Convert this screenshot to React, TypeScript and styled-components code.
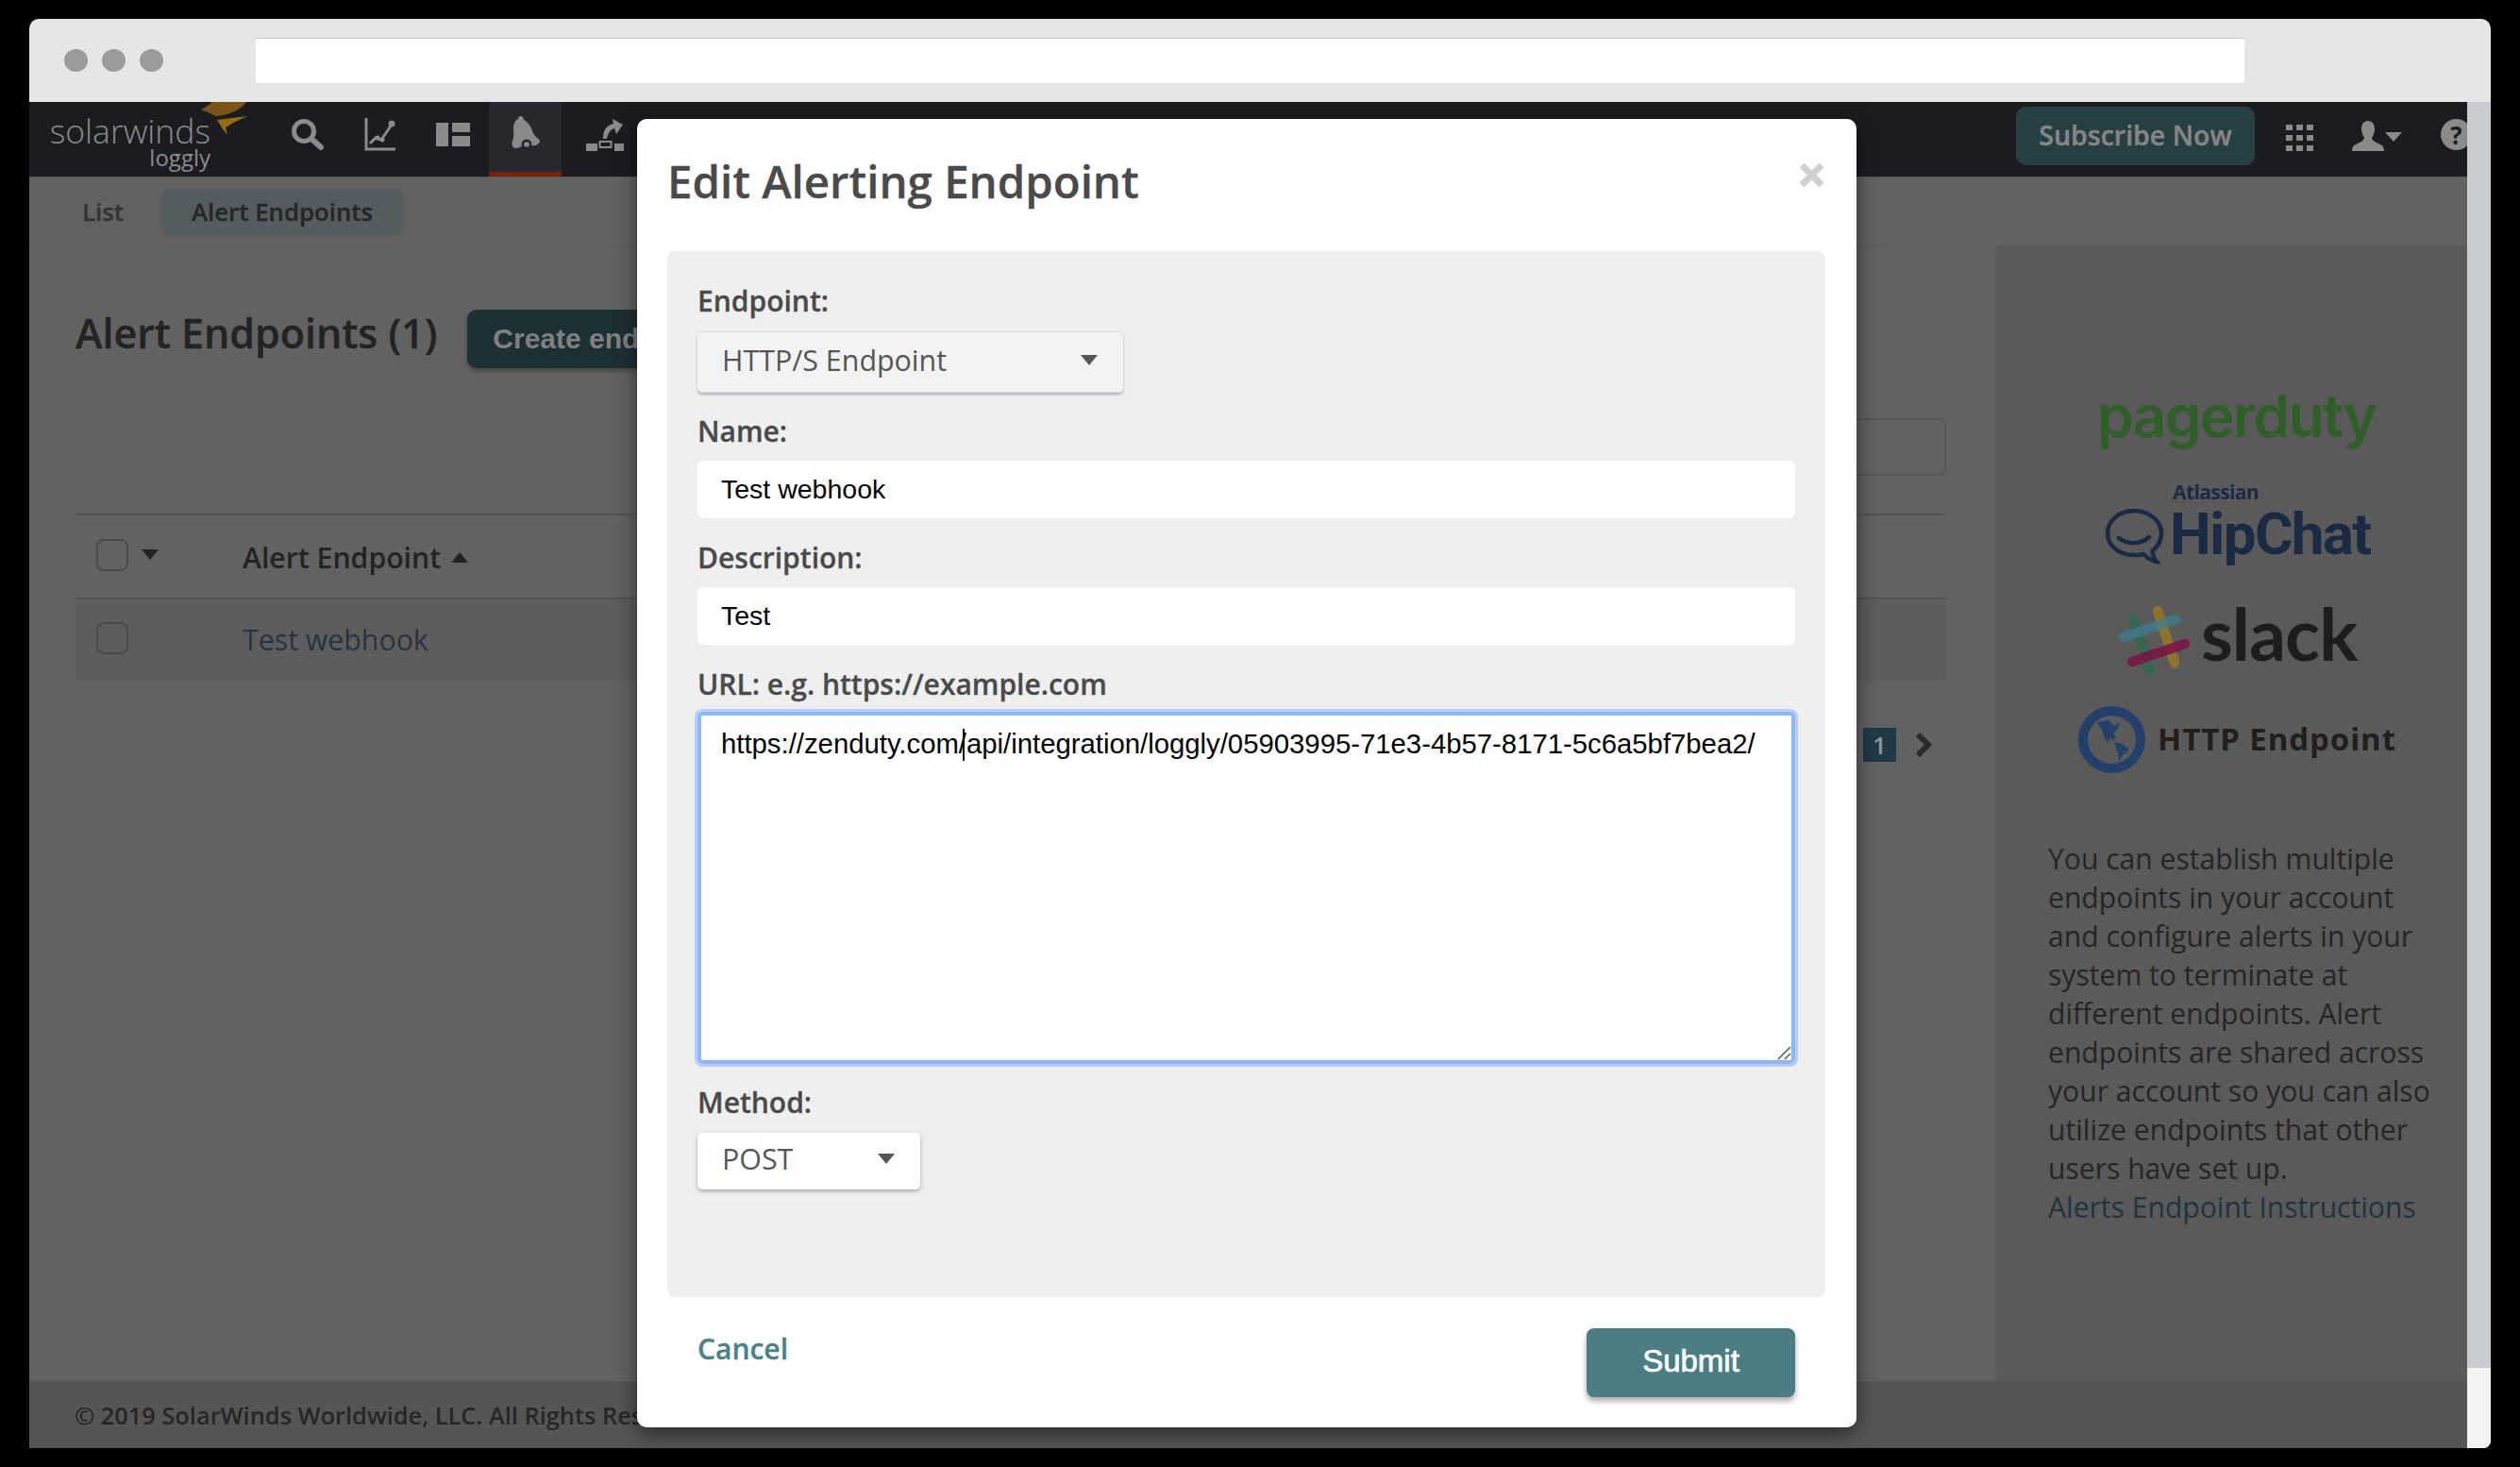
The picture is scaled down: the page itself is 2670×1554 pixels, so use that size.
import styled, { createGlobalStyle } from 'styled-components';

const GlobalStyle = createGlobalStyle`
  html, body {
    margin: 0;
    background: #000;
  }
  body {
    width: 2670px;
    height: 1554px;
    overflow: hidden;
    font-family: 'Open Sans', 'Liberation Sans', sans-serif;
  }
  * {
    box-sizing: border-box;
  }
`;

const Screen = styled.div`
  padding: 20px 31px;
  height: 1554px;
`;

const BrowserWindow = styled.div`
  position: relative;
  display: flex;
  flex-direction: column;
  width: 2608px;
  height: 1514px;
  overflow: hidden;
  border-radius: 10px 10px 8px 0;
  background: #e6e6e6;
`;

const TitleBar = styled.div`
  display: flex;
  align-items: center;
  flex: 0 0 88px;
  padding-left: 37px;
`;

const Dot = styled.span`
  width: 25px;
  height: 24px;
  margin-right: 15px;
  border-radius: 50%;
  background: #9b9b9b;
`;

const AddressBar = styled.div`
  width: 2107px;
  height: 48px;
  margin-left: 83px;
  border-top: 1px solid #c4c4c4;
  border-radius: 3px;
  background: #fff;
`;

const Body = styled.div`
  display: flex;
  flex: 1;
  min-height: 0;
`;

const Page = styled.div`
  display: flex;
  flex-direction: column;
  width: 2583px;
`;

const Scrollbar = styled.div`
  display: flex;
  flex-direction: column;
  flex: 1;
  background: #f3f3f4;
`;

const ScrollThumb = styled.div`
  height: 1341px;
  background: #c9ccd1;
`;

const Header = styled.header`
  position: relative;
  display: flex;
  align-items: stretch;
  flex: 0 0 80px;
  border-bottom: 1px solid #55565a;
  background: #1b1c20;
`;

const Brand = styled.div`
  position: relative;
  display: flex;
  flex-direction: column;
  align-items: flex-end;
  width: 256px;
  padding-right: 64px;
  color: #8c8c8c;
`;

const BrandName = styled.span`
  margin-top: 9px;
  font-size: 35.5px;
  font-weight: 300;
  line-height: 42px;
`;

const BrandSub = styled.span`
  margin-top: -7px;
  font-size: 24px;
  line-height: 30px;
`;

const BrandMark = styled.svg`
  position: absolute;
  top: 0;
  left: 182px;
`;

const NavItem = styled.div<{ $active?: boolean }>`
  display: flex;
  align-items: center;
  justify-content: center;
  width: 77px;
  padding-bottom: ${(p) => (p.$active ? '5px' : '10px')};
  border-bottom: ${(p) => (p.$active ? '5px solid #7a2208' : '0')};
  background: ${(p) => (p.$active ? '#27282d' : 'transparent')};
`;

const NavIcon = styled.svg<{ $shiftX?: number; $shiftY?: number }>`
  margin-left: ${(p) => p.$shiftX ?? 0}px;
  margin-top: ${(p) => p.$shiftY ?? 0}px;
`;

const HeaderRight = styled.div`
  display: flex;
  align-items: flex-start;
  margin-left: auto;
  overflow: hidden;
`;

const SubscribeButton = styled.div`
  display: flex;
  align-items: center;
  justify-content: center;
  width: 253px;
  height: 62px;
  margin-top: 5px;
  margin-right: -2px;
  padding-bottom: 2px;
  border-radius: 10px;
  background: #263f43;
  color: #868686;
  font-size: 28.5px;
  font-weight: 600;
  -webkit-text-stroke: 0.4px #868686;
`;

const HeaderIcon = styled.svg<{ $left: number; $top: number }>`
  flex: none;
  margin-left: ${(p) => p.$left}px;
  margin-top: ${(p) => p.$top}px;
  color: #8a8a8a;
`;

const HelpIcon = styled.span`
  display: flex;
  align-items: center;
  justify-content: center;
  flex: none;
  width: 33px;
  height: 33px;
  margin-top: 18px;
  margin-left: 41px;
  margin-right: -5px;
  border-radius: 50%;
  background: #8a8a8a;
  color: #1b1c20;
  font-size: 26px;
  font-weight: 700;
`;

const SubNav = styled.nav`
  display: flex;
  align-items: center;
  flex: 0 0 73px;
  padding-left: 24px;
  padding-top: 1px;
  border-bottom: 1px solid #5b5b5b;
  background: #626262;
`;

const Tab = styled.div<{ $active?: boolean }>`
  height: 50px;
  margin-right: 8px;
  padding: 0 32px;
  border-radius: 8px;
  background: ${(p) => (p.$active ? '#555c60' : 'transparent')};
  color: ${(p) => (p.$active ? '#262626' : '#333')};
  font-size: 25.8px;
  font-weight: 600;
  line-height: 48px;
  -webkit-text-stroke: 0.3px;
`;

const Main = styled.div`
  display: flex;
  flex: 0 0 1202px;
`;

const Content = styled.section`
  width: 2084px;
  padding: 67px 53px 0 49px;
  background: #626262;
`;

const TitleRow = styled.div`
  display: flex;
  gap: 32px;
`;

const PageTitle = styled.h1`
  margin: -6px 0 0;
  color: #232323;
  font-size: 43px;
  font-weight: 600;
  line-height: 62px;
  -webkit-text-stroke: 0.4px;
`;

const CreateButton = styled.div`
  width: 300px;
  height: 62px;
  padding-left: 27px;
  border-radius: 10px;
  background: #1c2f33;
  box-shadow: 0 3px 5px rgba(0, 0, 0, 0.3);
  color: #808080;
  font-family: 'Liberation Sans', sans-serif;
  font-size: 30px;
  font-weight: 700;
  line-height: 62px;
`;

const FilterRow = styled.div`
  display: flex;
  justify-content: flex-end;
  margin-top: 53px;
`;

const FilterInput = styled.div`
  width: 400px;
  height: 61px;
  border: 2px solid #585858;
  border-radius: 8px;
`;

const TableHead = styled.div`
  display: flex;
  align-items: center;
  height: 91px;
  margin-top: 40px;
  border-top: 2px solid #555;
  border-bottom: 2px solid #555;
`;

const TableRow = styled.div`
  display: flex;
  align-items: center;
  height: 86px;
  padding-bottom: 4px;
  background: #5d5d5d;
`;

const CheckCell = styled.div<{ $head?: boolean }>`
  display: flex;
  align-items: center;
  gap: 14px;
  width: 177px;
  padding-left: 22px;
  padding-bottom: ${(p) => (p.$head ? '4px' : '0')};
`;

const Checkbox = styled.span`
  width: 34px;
  height: 34px;
  border: 2px solid #4a4a4e;
  border-radius: 8px;
`;

const Caret = styled.span<{ $up?: boolean; $color?: string }>`
  display: inline-block;
  flex: none;
  width: 0;
  height: 0;
  border-left: 9px solid transparent;
  border-right: 9px solid transparent;
  ${(p) => (p.$up ? 'border-bottom' : 'border-top')}: 11px solid ${(p) => p.$color ?? '#555'};
`;

const HeadLabel = styled.div`
  display: flex;
  align-items: center;
  gap: 11px;
  padding-top: 1px;
  color: #232323;
  font-size: 30.2px;
  font-weight: 600;
`;

const RowLink = styled.a`
  margin-top: 3px;
  color: #24353f;
  font-size: 30.3px;
`;

const Pagination = styled.div`
  display: flex;
  align-items: center;
  justify-content: flex-end;
  gap: 20px;
  margin-top: 50px;
  padding-right: 15px;
`;

const PageNumber = styled.span`
  width: 35px;
  height: 36px;
  background: #1f3a46;
  color: #8a9aa0;
  font-size: 26px;
  font-weight: 600;
  line-height: 36px;
  text-align: center;
`;

const Sidebar = styled.aside`
  flex: 1;
  padding-top: 156px;
  background: #5a5a5a;
`;

const LogoRow = styled.div<{ $left: number; $height: number; $gap: number }>`
  position: relative;
  display: flex;
  align-items: flex-start;
  height: ${(p) => p.$height}px;
  margin-left: ${(p) => p.$left}px;
  margin-bottom: ${(p) => p.$gap}px;
`;

const PagerDutyMark = styled.span`
  margin-top: -21px;
  margin-left: -3px;
  color: #2f5e28;
  font-family: Inter, sans-serif;
  font-size: 62px;
  font-weight: 600;
  letter-spacing: -1.6px;
  line-height: 90px;
`;

const BubbleIcon = styled.svg`
  margin-top: 25px;
`;

const AtlassianMark = styled.span`
  position: absolute;
  top: -7px;
  left: 72px;
  color: #1b2a44;
  font-size: 21px;
  font-weight: 700;
  letter-spacing: -0.6px;
  line-height: 30px;
`;

const HipChatMark = styled.span`
  position: absolute;
  top: 11px;
  left: 69px;
  color: #1b2a44;
  font-family: Roboto, sans-serif;
  font-size: 62px;
  font-weight: 700;
  letter-spacing: -1.7px;
  line-height: 84px;
`;

const SlackMark = styled.span`
  margin-left: 12px;
  margin-top: -22px;
  color: #1f1c20;
  font-family: Lato, sans-serif;
  font-size: 77px;
  font-weight: 700;
  letter-spacing: -1px;
  line-height: 100px;
`;

const HttpMark = styled.span`
  margin-left: 13px;
  margin-top: 13px;
  color: #211e1c;
  font-size: 33px;
  font-weight: 700;
  letter-spacing: 0.9px;
  line-height: 44px;
`;

const SideText = styled.p`
  width: 415px;
  margin: 0 0 0 55px;
  color: #252525;
  font-size: 30.1px;
  line-height: 41px;
`;

const SideLink = styled.a`
  display: block;
  color: #1f3340;
`;

const Footer = styled.footer`
  flex: 1;
  padding-left: 48px;
  background: #555556;
  color: #262626;
  font-size: 25.4px;
  font-weight: 600;
  line-height: 72px;
`;

const Modal = styled.div`
  position: absolute;
  top: 106px;
  left: 644px;
  width: 1292px;
  height: 1386px;
  padding: 0 33px 0 32px;
  border-radius: 10px;
  background: #fff;
  box-shadow: 0 6px 22px rgba(0, 0, 0, 0.55);
`;

const ModalHeader = styled.div`
  display: flex;
  justify-content: space-between;
  height: 140px;
`;

const ModalTitle = styled.h2`
  margin: 0;
  padding-top: 32px;
  color: #4a4a4a;
  font-size: 47.4px;
  font-weight: 600;
  line-height: 68px;
  -webkit-text-stroke: 0.3px;
`;

const CloseButton = styled.svg`
  margin-top: 47px;
  margin-right: 2px;
  color: #d0d0d0;
`;

const FormPanel = styled.div`
  height: 1108px;
  padding: 33px 32px 0 32px;
  border-radius: 8px;
  background: #efefef;
`;

const Field = styled.div`
  margin-bottom: 22px;
`;

const Label = styled.label`
  display: block;
  height: 40px;
  margin-bottom: 11px;
  color: #4a4a4a;
  font-size: 30px;
  font-weight: 600;
  line-height: 40px;
  -webkit-text-stroke: 0.3px;
`;

const Select = styled.div<{ $width: number; $height: number; $muted?: boolean }>`
  display: flex;
  align-items: center;
  justify-content: space-between;
  width: ${(p) => p.$width}px;
  height: ${(p) => p.$height}px;
  margin-top: ${(p) => (p.$muted ? '13px' : '12px')};
  padding: 0 27px 5px 26px;
  border-radius: 5px;
  background: ${(p) => (p.$muted ? '#f3f3f4' : '#fff')};
  box-shadow: ${(p) =>
    p.$muted
      ? '0 0 0 1px #dcdce4, 0 3px 3px rgba(120, 120, 160, 0.55)'
      : '0 2px 4px rgba(90, 95, 105, 0.5)'};
  color: #555;
  font-size: 30.4px;
`;

const TextInput = styled.input`
  display: block;
  width: 100%;
  height: 61px;
  padding: 0 25px;
  border: 0;
  border-radius: 6px;
  outline: 0;
  background: #fff;
  color: #000;
  font-family: 'Liberation Sans', sans-serif;
  font-size: 28.5px;
`;

const UrlBox = styled.div`
  position: relative;
  width: 100%;
  height: 373px;
  margin-top: -2px;
  margin-bottom: -1px;
  padding: 12px 21px;
  border: 4px solid #8fb6fa;
  border-radius: 5px;
  outline: 3px solid #b4cdfa;
  background: #fff;
  color: #000;
  font-family: 'Liberation Sans', sans-serif;
  font-size: 29.3px;
  line-height: 36px;
  white-space: nowrap;
`;

const TextCaret = styled.span`
  display: inline-block;
  width: 0;
  height: 34px;
  margin-left: 4px;
  margin-right: -6px;
  border-left: 2px solid #111;
  vertical-align: -8px;
`;

const ResizeGrip = styled.svg`
  position: absolute;
  right: 0;
  bottom: 0;
  color: #555;
`;

const ModalFooter = styled.div`
  display: flex;
  justify-content: space-between;
  padding: 33px 32px 0 32px;
`;

const CancelLink = styled.a`
  color: #4a8286;
  font-size: 30px;
  font-weight: 600;
  line-height: 44px;
  -webkit-text-stroke: 0.3px;
`;

const SubmitButton = styled.button`
  width: 221px;
  height: 73px;
  padding: 0 0 4px;
  border: 0;
  border-radius: 8px;
  background: #4b7e82;
  box-shadow: 0 4px 6px rgba(0, 0, 0, 0.35);
  color: #fff;
  font-family: 'Liberation Sans', sans-serif;
  font-size: 33px;
  -webkit-text-stroke: 0.7px #fff;
`;

const App = () => {
  return (
    <Screen>
      <GlobalStyle />
      <BrowserWindow>
        <TitleBar>
          <Dot />
          <Dot />
          <Dot />
          <AddressBar />
        </TitleBar>
        <Body>
          <Page>
            <Header>
              <Brand>
                <BrandName>solarwinds</BrandName>
                <BrandSub>loggly</BrandSub>
                <BrandMark width="50" height="36" viewBox="0 0 50 36">
                  <path d="M0 8 Q8 4 12 0 H48 Q38 13 16 15 Z" fill="#7a5518" />
                  <path d="M17 19 L50 15 Q38 19 26 27 L28 35 Q22 28 17 19 Z" fill="#9a6c14" />
                </BrandMark>
              </Brand>
              <NavItem>
                <svg width="35" height="33" viewBox="0 0 35 33" fill="none" stroke="#8a8a8a">
                  <circle cx="14" cy="13" r="10.5" strokeWidth="5" />
                  <path d="M22 21 L32 30" strokeWidth="6" strokeLinecap="round" />
                </svg>
              </NavItem>
              <NavItem>
                <svg width="33" height="35" viewBox="0 0 33 35" fill="none" stroke="#8a8a8a">
                  <path d="M2 0 V33 H33" strokeWidth="3" />
                  <path d="M6 27 L12 21 L18 23 L29 7" strokeWidth="3" />
                  <circle cx="29" cy="6" r="3.5" fill="#8a8a8a" strokeWidth="0" />
                  <circle cx="14" cy="21" r="2.5" fill="#8a8a8a" strokeWidth="0" />
                  <circle cx="19" cy="23" r="2.5" fill="#8a8a8a" strokeWidth="0" />
                </svg>
              </NavItem>
              <NavItem>
                <svg width="36" height="25" viewBox="0 0 36 25" fill="#8a8a8a">
                  <rect width="13" height="25" />
                  <rect x="17" width="19" height="10" />
                  <rect x="17" y="14" width="19" height="11" />
                </svg>
              </NavItem>
              <NavItem $active>
                <NavIcon $shiftY={-4} width="32" height="36" viewBox="0 0 32 36">
                  <path
                    d="M9 0 C12 -0.5 14 2 14 4 C20 7 22 13 24 18 C26 22 29 23 31 26 C31 30 26 32 20 31 C15 30 9 34 5 34 C1 33 1 29 2 26 C4 22 3 17 3 13 C3 8 5 4 8 3 Z"
                    fill="#8a8a8a"
                  />
                  <circle cx="17" cy="30" r="5.5" fill="#27282d" />
                  <circle cx="17" cy="30" r="2.8" fill="#8a8a8a" />
                </NavIcon>
              </NavItem>
              <NavItem>
                <NavIcon $shiftX={14} $shiftY={-3} width="40" height="38" viewBox="0 0 40 38" fill="#8a8a8a">
                  <rect y="30" width="12" height="8" />
                  <rect x="14.5" y="28" width="12" height="6" fill="none" stroke="#8a8a8a" strokeWidth="2" />
                  <rect x="30" y="30" width="10" height="8" />
                  <path d="M18 25 C18 15 22 11 29 9 L28 4 L39 10 L32 20 L30 14 C26 15 23 19 22 25 Z" />
                </NavIcon>
              </NavItem>
              <HeaderRight>
                <SubscribeButton>Subscribe Now</SubscribeButton>
                <HeaderIcon $left={35} $top={24} width="29" height="28" viewBox="0 0 29 28" fill="currentColor">
                  {[0, 11, 22].map((y) =>
                    [0, 11, 22].map((x) => <rect key={`${x}-${y}`} x={x} y={y} width="7" height="6" />),
                  )}
                </HeaderIcon>
                <HeaderIcon $left={41} $top={20} width="34" height="32" viewBox="0 0 34 32" fill="currentColor">
                  <path d="M17 0 C22 0 24 4 24 9 C24 13 22 16 21 18 C21 21 26 23 30 25 C33 26 34 29 34 32 H0 C0 29 1 26 4 25 C8 23 13 21 13 18 C12 16 10 13 10 9 C10 4 12 0 17 0 Z" />
                </HeaderIcon>
                <HeaderIcon $left={1} $top={32} width="18" height="10" viewBox="0 0 18 10" fill="currentColor">
                  <path d="M0 0 H18 L9 10 Z" />
                </HeaderIcon>
                <HelpIcon>?</HelpIcon>
              </HeaderRight>
            </Header>
            <SubNav>
              <Tab>List</Tab>
              <Tab $active>Alert Endpoints</Tab>
            </SubNav>
            <Main>
              <Content>
                <TitleRow>
                  <PageTitle>Alert Endpoints (1)</PageTitle>
                  <CreateButton>Create endpoint</CreateButton>
                </TitleRow>
                <FilterRow>
                  <FilterInput />
                </FilterRow>
                <TableHead>
                  <CheckCell $head>
                    <Checkbox />
                    <Caret $color="#232323" />
                  </CheckCell>
                  <HeadLabel>
                    Alert Endpoint
                    <Caret $up $color="#232323" />
                  </HeadLabel>
                </TableHead>
                <TableRow>
                  <CheckCell>
                    <Checkbox />
                  </CheckCell>
                  <RowLink>Test webhook</RowLink>
                </TableRow>
                <Pagination>
                  <PageNumber>1</PageNumber>
                  <svg width="18" height="26" viewBox="0 0 18 26" fill="none" stroke="#2b2b2b" strokeWidth="6">
                    <path d="M3 2 L14 13 L3 24" />
                  </svg>
                </Pagination>
              </Content>
              <Sidebar>
                <LogoRow $left={110} $height={56} $gap={40}>
                  <PagerDutyMark>pagerduty</PagerDutyMark>
                </LogoRow>
                <LogoRow $left={115} $height={84} $gap={45}>
                  <BubbleIcon width="64" height="60" viewBox="0 0 64 60" fill="none" stroke="#1b2a44">
                    <path
                      d="M31 3 C15 3 3 14 3 27 C3 40 15 50 31 50 C35 50 39 50 41 49 C45 53 49 56 55 57 C52 53 50 49 51 45 C57 40 60 34 60 27 C60 14 47 3 31 3 Z"
                      strokeWidth="4.5"
                    />
                    <path d="M15 32 C24 39 38 39 47 31" strokeWidth="4.5" strokeLinecap="round" />
                  </BubbleIcon>
                  <AtlassianMark>Atlassian</AtlassianMark>
                  <HipChatMark>HipChat</HipChatMark>
                </LogoRow>
                <LogoRow $left={130} $height={75} $gap={31}>
                  <svg width="75" height="75" viewBox="0 0 75 75" fill="none" strokeWidth="10.5" strokeLinecap="round">
                    <g opacity="0.85">
                      <path d="M15 13 L33 68" stroke="#2f6a50" />
                    </g>
                    <g opacity="0.8">
                      <path d="M41 5 L59 60" stroke="#9a7a22" />
                    </g>
                    <g opacity="0.75">
                      <path d="M5 33 L61 14" stroke="#3f7c90" />
                    </g>
                    <g opacity="0.85">
                      <path d="M14 59 L70 40" stroke="#7a1245" />
                    </g>
                  </svg>
                  <SlackMark>slack</SlackMark>
                </LogoRow>
                <LogoRow $left={87} $height={71} $gap={70}>
                  <svg width="71" height="71" viewBox="0 0 71 71">
                    <circle cx="35.5" cy="35.5" r="30.5" fill="none" stroke="#22406a" strokeWidth="10" />
                    <path
                      d="M20 17 L32 15 L38 21 L44 17 L42 24 L37 29 L40 33 L36 36 L33 33 L32 39 L27 33 L25 25 Z M38 38 L46 40 L54 46 L47 52 L43 58 L42 50 Z"
                      fill="#22406a"
                    />
                  </svg>
                  <HttpMark>HTTP Endpoint</HttpMark>
                </LogoRow>
                <SideText>
                  You can establish multiple endpoints in your account and configure alerts in your system to
                  terminate at different endpoints. Alert endpoints are shared across your account so you can also
                  utilize endpoints that other users have set up.
                  <SideLink>Alerts Endpoint Instructions</SideLink>
                </SideText>
              </Sidebar>
            </Main>
            <Footer>© 2019 SolarWinds Worldwide, LLC. All Rights Reserved.</Footer>
          </Page>
          <Scrollbar>
            <ScrollThumb />
          </Scrollbar>
        </Body>
        <Modal>
          <ModalHeader>
            <ModalTitle>Edit Alerting Endpoint</ModalTitle>
            <CloseButton width="25" height="25" viewBox="0 0 25 25" fill="none" stroke="currentColor" strokeWidth="7">
              <path d="M2 2 L23 23 M23 2 L2 23" />
            </CloseButton>
          </ModalHeader>
          <FormPanel>
            <Field>
              <Label>Endpoint:</Label>
              <Select $width={451} $height={63} $muted>
                HTTP/S Endpoint
                <Caret />
              </Select>
            </Field>
            <Field>
              <Label>Name:</Label>
              <TextInput defaultValue="Test webhook" readOnly />
            </Field>
            <Field>
              <Label>Description:</Label>
              <TextInput defaultValue="Test" readOnly />
            </Field>
            <Field>
              <Label>URL: e.g. https://example.com</Label>
              <UrlBox>
                https://zenduty.com
                <TextCaret />
                /api/integration/loggly/05903995-71e3-4b57-8171-5c6a5bf7bea2/
                <ResizeGrip width="16" height="16" viewBox="0 0 16 16" fill="none" stroke="currentColor" strokeWidth="1.5">
                  <path d="M2 15 L15 2 M9 15 L15 9" />
                </ResizeGrip>
              </UrlBox>
            </Field>
            <Field>
              <Label>Method:</Label>
              <Select $width={236} $height={60}>
                POST
                <Caret />
              </Select>
            </Field>
          </FormPanel>
          <ModalFooter>
            <CancelLink>Cancel</CancelLink>
            <SubmitButton>Submit</SubmitButton>
          </ModalFooter>
        </Modal>
      </BrowserWindow>
    </Screen>
  );
};

export default App;
